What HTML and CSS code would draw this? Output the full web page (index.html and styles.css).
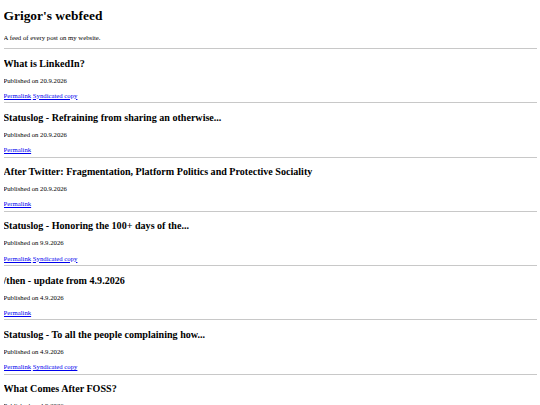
FILE: index.html
```html
<!DOCTYPE html>
<html lang="en">
<head>
    <meta charset="UTF-8">
    <title>Grigor's webfeed</title>
    <link rel="stylesheet" href="styles.css">
</head>
<body>
<h1 class="title">Grigor's webfeed</h1>
<p class="lead">A feed of every post on my website.</p>
<hr class="sep">
<div class="post">
    <h2>What is LinkedIn?</h2>
    <p class="date">Published on 20.9.2026</p>
    <p class="links"><a href="#">Permalink</a> <a href="#">Syndicated copy</a></p>
</div>
<hr class="sep">
<div class="post">
    <h2>Statuslog - Refraining from sharing an otherwise...</h2>
    <p class="date">Published on 20.9.2026</p>
    <p class="links"><a href="#">Permalink</a></p>
</div>
<hr class="sep">
<div class="post">
    <h2>After Twitter: Fragmentation, Platform Politics and Protective Sociality</h2>
    <p class="date">Published on 20.9.2026</p>
    <p class="links"><a href="#">Permalink</a></p>
</div>
<hr class="sep">
<div class="post">
    <h2>Statuslog - Honoring the 100+ days of the...</h2>
    <p class="date">Published on 9.9.2026</p>
    <p class="links"><a href="#">Permalink</a> <a href="#">Syndicated copy</a></p>
</div>
<hr class="sep">
<div class="post">
    <h2>/then - update from 4.9.2026</h2>
    <p class="date">Published on 4.9.2026</p>
    <p class="links"><a href="#">Permalink</a></p>
</div>
<hr class="sep">
<div class="post">
    <h2>Statuslog - To all the people complaining how...</h2>
    <p class="date">Published on 4.9.2026</p>
    <p class="links"><a href="#">Permalink</a> <a href="#">Syndicated copy</a></p>
</div>
<hr class="sep">
<div class="post">
    <h2>What Comes After FOSS?</h2>
    <p class="date">Published on 4.9.2026</p>
    <p class="links"><a href="#">Permalink</a></p>
</div>
</body>
</html>
```

FILE: styles.css
```css
body{margin:0 3.5px;padding-top:0.1px;font-family:"Liberation Serif","Times New Roman",serif;font-size:6.72px;color:#000;background:#fff;}
.title{font-size:13.44px;margin:8.3px 0 9.4px;}
.lead{margin:0 0 7.2px;}
.sep{border:0;border-top:1px solid #c8c8c8;margin:0;height:0;}
.post{padding:0.1px 0;}
.post h2{font-size:10.08px;margin:8.5px 0 8px;}
.post p{margin:0;}
.post .date{margin-bottom:8.3px;}
.post .links{margin-bottom:3.3px;}
.post a{color:#0000ee;}
```
